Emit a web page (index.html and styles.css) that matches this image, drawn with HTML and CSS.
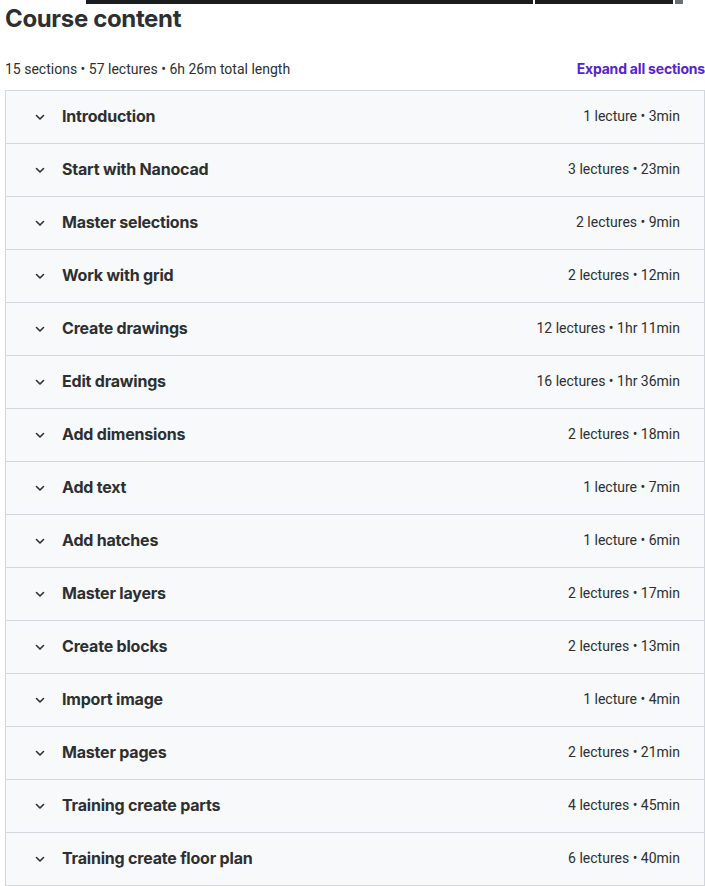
FILE: index.html
```html
<!DOCTYPE html>
<html lang="en">
<head>
    <meta charset="UTF-8">
    <meta name="viewport" content="width=device-width, initial-scale=1.0">
    <title>Course content</title>
    <link rel="stylesheet" href="styles.css">
</head>
<body>

    <!-- Bottom edge of the preview strip above -->
    <div class="preview-strip">
        <span class="strip-part strip-wide"></span>
        <span class="strip-part strip-narrow"></span>
        <span class="strip-part strip-tiny"></span>
    </div>

    <main class="curriculum">
        <h2 class="curriculum-title">Course content</h2>

        <div class="curriculum-header">
            <span class="curriculum-stats">15 sections • 57 lectures • 6h 26m total length</span>
            <button class="expand-all">Expand all sections</button>
        </div>

        <div class="section-list" id="sectionList"></div>
    </main>

    <script>
        // Sections of the course: title and summary on the right
        const sections = [
            ['Introduction', '1 lecture • 3min'],
            ['Start with Nanocad', '3 lectures • 23min'],
            ['Master selections', '2 lectures • 9min'],
            ['Work with grid', '2 lectures • 12min'],
            ['Create drawings', '12 lectures • 1hr 11min'],
            ['Edit drawings', '16 lectures • 1hr 36min'],
            ['Add dimensions', '2 lectures • 18min'],
            ['Add text', '1 lecture • 7min'],
            ['Add hatches', '1 lecture • 6min'],
            ['Master layers', '2 lectures • 17min'],
            ['Create blocks', '2 lectures • 13min'],
            ['Import image', '1 lecture • 4min'],
            ['Master pages', '2 lectures • 21min'],
            ['Training create parts', '4 lectures • 45min'],
            ['Training create floor plan', '6 lectures • 40min']
        ];

        const sectionList = document.getElementById('sectionList');

        sections.forEach(function(item) {
            const row = document.createElement('div');
            row.className = 'section-row';
            row.innerHTML =
                '<svg class="chevron" viewBox="0 0 12 12" width="12" height="12">' +
                '<path d="M2.5 4.5 L6 8 L9.5 4.5" fill="none" stroke="currentColor" stroke-width="1.6" stroke-linecap="round" stroke-linejoin="round"/></svg>' +
                '<span class="section-title"></span>' +
                '<span class="section-meta"></span>';
            row.querySelector('.section-title').textContent = item[0];
            row.querySelector('.section-meta').textContent = item[1];
            sectionList.appendChild(row);
        });
    </script>

</body>
</html>
```

FILE: styles.css
```css
/* Page */
body {
    margin: 0 0 0 5px;
    font-family: Roboto, "Liberation Sans", sans-serif;
    color: #2d2f31;
    background-color: #fff;
}

/* Dark strip cut off at the top */
.preview-strip {
    display: flex;
    height: 4px;
    padding-left: 81px;
    gap: 2px;
}

.strip-part {
    background-color: #1c1d1f;
    height: 4px;
}

.strip-wide {
    width: 447px;
}

.strip-narrow {
    width: 138px;
}

.strip-tiny {
    width: 8px;
    background-color: #6a6f73;
}

/* Heading and summary line */
.curriculum-title {
    margin: 0;
    padding-top: 1px;
    font-family: Inter, Roboto, sans-serif;
    font-size: 24px;
    line-height: 28px;
    font-weight: 700;
    letter-spacing: -0.35px;
}

.curriculum-header {
    display: flex;
    justify-content: space-between;
    align-items: center;
    margin-top: 26px;
    margin-bottom: 11px;
    font-size: 14px;
    line-height: 20px;
}

.expand-all {
    background: none;
    border: none;
    padding: 0 0 1px;
    font-family: Inter, Roboto, sans-serif;
    font-size: 14px;
    font-weight: 700;
    letter-spacing: -0.2px;
    color: #5624d0;
    cursor: pointer;
}

/* Section accordion */
.section-list {
    border: 1px solid #d1d7dc;
    border-top: none;
}

.section-row {
    display: flex;
    align-items: center;
    height: 52px;
    border-top: 1px solid #d1d7dc;
    background-color: #f7f9fa;
    padding: 0 24px 0 28px;
}

.chevron {
    color: #2d2f31;
    flex-shrink: 0;
    margin-top: -1px;
}

.section-title {
    flex: 1;
    margin-left: 16px;
    font-family: Inter, Roboto, sans-serif;
    font-size: 16px;
    font-weight: 700;
    letter-spacing: -0.2px;
    margin-top: -3px;
}

.section-meta {
    font-size: 14px;
    color: #2d2f31;
    margin-top: -3px;
}
```
